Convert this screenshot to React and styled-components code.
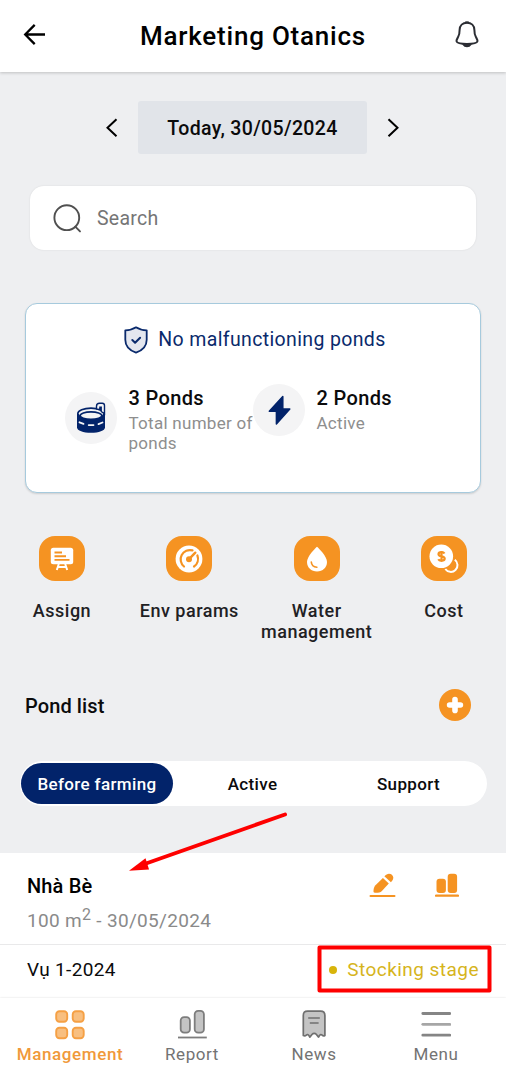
import { useState } from "react";
import styled, { createGlobalStyle } from "styled-components";

const GlobalStyle = createGlobalStyle`
* { box-sizing: border-box; }
body {
  margin: 0;
  background-color: #eeeff1;
  font-family: Roboto, "Liberation Sans", sans-serif;
  color: #0b0b0c;
}
button {
  border: none;
  background: none;
  padding: 0;
  font: inherit;
  color: inherit;
  letter-spacing: inherit;
}
svg { display: block; flex: none; }
`

const Screen = styled.div`
position: relative;
width: 506px;
height: 1077px;
overflow: hidden;
display: flex;
flex-direction: column;
`

const Header = styled.header`
display: flex;
align-items: center;
justify-content: space-between;
height: 72px;
flex: none;
padding: 0 26px 2px 22px;
background-color: #fff;
box-shadow: 0 1px 3px rgba(0, 0, 0, 0.2);
`

const Title = styled.h1`
margin: 1px 0 0 6px;
font-size: 26px;
font-weight: 500;
letter-spacing: 0.78px;
color: #000;
`

const DateBar = styled.div`
display: flex;
align-items: center;
justify-content: center;
gap: 20px;
height: 53px;
margin-top: 29px;
padding-right: 1px;
flex: none;
`

const DateButton = styled.button`
width: 229px;
height: 53px;
padding-top: 2px;
border-radius: 3px;
background-color: #e1e4e9;
font-size: 19.5px;
font-weight: 500;
letter-spacing: 0.35px;
`

const SearchBox = styled.label`
display: flex;
align-items: center;
gap: 15px;
height: 64px;
flex: none;
margin: 32px 30px 0;
padding: 1px 0 0 23px;
border-radius: 14px;
background-color: #fff;
box-shadow: 0 0 2px rgba(0, 0, 0, 0.1);
`

const SearchInput = styled.input`
width: 300px;
border: none;
outline: none;
padding: 0;
font-family: inherit;
font-size: 19.5px;
letter-spacing: 0.25px;
&::placeholder { color: #757575; opacity: 1; }
`

const Summary = styled.section`
height: 190px;
flex: none;
margin: 53px 25px 0;
border: 1px solid #a6cadd;
border-radius: 12px;
background-color: #fff;
box-shadow: 0 1px 2px rgba(0, 0, 0, 0.14);
`

const SummaryTitle = styled.div`
display: flex;
align-items: center;
justify-content: center;
gap: 10px;
height: 28px;
margin-top: 22px;
padding-left: 4px;
font-size: 19.5px;
letter-spacing: 0.36px;
color: #0a2a6c;
span { margin-top: -2px; }
`

const Stats = styled.div`
display: flex;
align-items: flex-start;
margin: 30px 0 0 39px;
`

const Stat = styled.div`
display: flex;
gap: 11.5px;
width: 188px;
`

const StatIcon = styled.div`
display: flex;
align-items: center;
justify-content: center;
width: 52px;
height: 52px;
flex: none;
border-radius: 50%;
background-color: #f4f4f5;
margin-top: ${props => props.$top || 0}px;
`

const StatText = styled.div`
padding-top: 2px;
white-space: pre;
font-size: 17px;
line-height: 20px;
letter-spacing: 0.28px;
color: #8e8e8e;
h3 {
  margin: 0 0 2px;
  font-size: 20px;
  font-weight: 500;
  line-height: 25px;
  letter-spacing: 0.35px;
  color: #0b0b0c;
}
`

const Actions = styled.nav`
display: flex;
justify-content: space-between;
flex: none;
height: 115px;
margin-top: 43px;
padding: 0 6px;
`

const Action = styled.button`
display: flex;
flex-direction: column;
align-items: center;
justify-content: flex-start;
gap: 19px;
width: 112px;
font-size: 18px;
font-weight: 500;
line-height: 21.3px;
letter-spacing: 0.5px;
color: #1f2124;
`

const ActionIcon = styled.span`
display: flex;
align-items: center;
justify-content: center;
width: 46px;
height: 45px;
flex: none;
border-radius: 16px;
background-color: #f59322;
`

const ListHeader = styled.div`
display: flex;
align-items: center;
justify-content: space-between;
height: 32px;
flex: none;
margin-top: 38px;
padding: 0 35.5px 0 25px;
font-size: 20px;
font-weight: 500;
letter-spacing: 0.1px;
span { padding-top: 2px; }
`

const AddButton = styled.button`
display: flex;
align-items: center;
justify-content: center;
width: 32px;
height: 32px;
border-radius: 50%;
background-color: #f59322;
`

const Tabs = styled.div`
display: flex;
align-items: center;
height: 45px;
flex: none;
margin: 40px 19px 0 20px;
padding: 0 2px 0 1px;
border-radius: 23px;
background-color: #fff;
`

const Tab = styled.button`
width: ${props => props.$active ? 152 : 156}px;
height: 41px;
padding-left: ${props => props.$active ? 0 : 3}px;
border-radius: 21px;
background-color: ${props => props.$active ? "#02236a" : "transparent"};
color: ${props => props.$active ? "#fff" : "#0b0b0c"};
font-size: 17px;
font-weight: 500;
letter-spacing: 0.36px;
`

const PondCard = styled.article`
flex: 1;
margin-top: 47px;
background-color: #fff;
`

const PondHead = styled.div`
display: flex;
justify-content: space-between;
height: 92px;
padding: 18px 47px 0 27px;
border-bottom: 1px solid #e9e9ea;
`

const PondName = styled.h2`
margin: 0;
font-size: 20px;
font-weight: 500;
line-height: 30px;
letter-spacing: 0.15px;
color: #000;
`

const PondMeta = styled.p`
margin: 5px 0 0;
font-size: 19px;
line-height: 30px;
letter-spacing: 0.32px;
color: #8a8a8a;
sup {
  font-size: 16px;
  line-height: 0;
  vertical-align: 7px;
}
`

const PondActions = styled.div`
display: flex;
align-items: flex-start;
gap: 39px;
padding-top: 2px;
`

const Crop = styled.div`
display: flex;
align-items: center;
justify-content: space-between;
height: 49px;
padding: 0 27px;
font-size: 19px;
letter-spacing: 0.35px;
`

const Stage = styled.span`
display: flex;
align-items: center;
gap: 10px;
font-size: 19px;
letter-spacing: 0.46px;
color: #d6b41c;
&::before {
  content: "";
  width: 8px;
  height: 8px;
  border-radius: 50%;
  background-color: #d8b40a;
}
`

const BottomNav = styled.nav`
display: flex;
height: 79px;
flex: none;
padding: 0 9px 0 9px;
background-color: #fff;
box-shadow: 0 0 2px rgba(0, 0, 0, 0.14);
`

const NavItem = styled.button`
display: flex;
flex-direction: column;
align-items: center;
width: 122px;
padding-top: 12px;
gap: 2px;
font-size: 17px;
line-height: 24px;
letter-spacing: 0.6px;
font-weight: ${props => props.$active ? 500 : 400};
color: ${props => props.$active ? "#f0993a" : "#737373"};
`

const Marks = styled.svg`
position: absolute;
left: 0;
top: 0;
pointer-events: none;
`

const BackIcon = () => (
  <svg width="24" height="24" viewBox="0 0 24 24" fill="none" stroke="#000" strokeWidth="2.3">
    <path d="M23 11.500H3.200M12.700 1.900L3.200 11.500l9.500 9.600" />
  </svg>
)

const BellIcon = () => (
  <svg width="26" height="28" viewBox="0 0 26 28" fill="none" stroke="#2b2d33" strokeWidth="2" strokeLinejoin="round">
    <path d="M13 1.700c-4.400 0-7.300 3.100-7.400 7.200 0 3.200-.3 5.200-1.500 7.200-.9 1.600-2 3-1.500 4.400.5 1.600 4.400 2.400 10.400 2.400s9.900-.8 10.400-2.400c.5-1.400-.6-2.800-1.500-4.400-1.200-2-1.500-4-1.500-7.200C20.300 4.800 17.400 1.700 13 1.700z" />
    <path d="M9.500 23.500c1.500 2.300 5.500 2.300 7 0z" fill="#2b2d33" />
    <path d="M11.200 1.400h3.600" />
  </svg>
)

const Chevron = ({ d }) => (
  <svg width="12" height="20" viewBox="0 0 12 20" fill="none" stroke="#000" strokeWidth="2">
    <path d={d} />
  </svg>
)

const SearchIcon = () => (
  <svg width="29" height="30" viewBox="0 0 29 30" fill="none" stroke="#505050" strokeWidth="1.900" strokeLinecap="round">
    <circle cx="13.800" cy="13.700" r="12.400" />
    <path d="M22.300 22.700L27 27.400" />
  </svg>
)

const ShieldIcon = () => (
  <svg width="24" height="28" viewBox="0 0 24 28" fill="none" stroke="#0a2a6c" strokeWidth="1.800" strokeLinejoin="round" strokeLinecap="round">
    <path d="M12 1.300c3 2 6.500 2.900 10.700 3v9.500c0 6.500-4 10.600-10.700 12.900C5.300 24.400 1.300 20.300 1.300 13.800V4.300C5.500 4.200 9 3.300 12 1.300z" fill="#e4e7ef" />
    <path d="M8.300 14l2.800 2.700 5-5" strokeWidth="2" />
  </svg>
)

const PondIcon = () => (
  <svg width="30" height="32" viewBox="0 0 30 32">
    <path d="M1 11.500v14c0 3.100 6.300 5.300 14 5.300s14-2.200 14-5.300v-14z" fill="#02236a" />
    <ellipse cx="15" cy="11.500" rx="13.200" ry="5.400" fill="#f4f4f5" stroke="#02236a" strokeWidth="1.600" />
    <ellipse cx="15" cy="13.600" rx="10.800" ry="3.700" fill="#f4f4f5" stroke="#02236a" strokeWidth="1.600" />
    <path d="M20.500 7V4.200c0-2 1-3 3-3h2.800c1.600 0 2.200.7 2.200 2.200v8.500l-3.300-2.400V5.200h-1.300v2.600z" fill="#f4f4f5" stroke="#02236a" strokeWidth="1.400" />
    <path d="M3.500 20.300l4 1.600M12.700 23.100h4.800M22.500 22.100l4-1.600" stroke="#f4f4f5" strokeWidth="1.800" strokeLinecap="round" />
  </svg>
)

const BoltIcon = () => (
  <svg width="24" height="32" viewBox="0 0 24 32" fill="#02236a" stroke="#02236a" strokeWidth="1.500" strokeLinejoin="round">
    <path d="M15.800 2.500L2.300 17.200h7.100v12.700L22.800 15h-7z" />
  </svg>
)

const AssignIcon = () => (
  <svg width="26" height="26" viewBox="0 0 26 26" fill="none">
    <rect x="1.800" y="1.800" width="22.400" height="16.400" rx="2.500" fill="#fff" />
    <path d="M5.500 6.500h7.500M5.500 10.200h11.500M5.500 13.900h15" stroke="#f59322" strokeWidth="1.900" />
    <path d="M9.800 18L7.800 24M16.200 18L18.200 24M9 21h8" stroke="#fff" strokeWidth="2" />
  </svg>
)

const GaugeIcon = () => (
  <svg width="28" height="28" viewBox="0 0 28 28" fill="none" strokeLinecap="round">
    <circle cx="14" cy="14" r="13.400" fill="#fff" />
    <path d="M9 21.500A9.300 9.300 0 0 1 17.500 5.400M22.400 10.500a9.300 9.300 0 0 1-3.400 11" stroke="#f59322" strokeWidth="2.200" />
    <path d="M14.500 13.700L20.300 7.700" stroke="#f59322" strokeWidth="2.400" />
    <circle cx="14" cy="14.300" r="3" fill="#f59322" />
  </svg>
)

const DropIcon = () => (
  <svg width="22" height="26" viewBox="0 0 22 26" fill="none">
    <path d="M11 .7C9.300 2.200 1 10.300 1 16c0 5.500 4.300 9.500 10 9.500S21 21.500 21 16C21 10.300 12.700 2.200 11 .7z" fill="#fff" />
    <path d="M5.300 16c.2 3 2.400 5 5.600 5.200" stroke="#f59322" strokeWidth="1.600" strokeLinecap="round" />
  </svg>
)

const CoinIcon = () => (
  <svg width="30" height="30" viewBox="0 0 30 30" fill="none">
    <path d="M16.300 25A6.700 6.700 0 1 0 25.800 15.800" stroke="#fff" strokeWidth="2" />
    <circle cx="12.300" cy="12.300" r="11.800" fill="#fff" />
    <path d="M15.500 9.500c-.6-1-1.700-1.300-3-1.300-1.800 0-3 .7-3 2.100 0 3 6.200 1.200 6.200 4.300 0 1.500-1.300 2.200-3.200 2.200-1.500 0-2.700-.5-3.200-1.500M12.500 7v11" stroke="#f59322" strokeWidth="2.200" />
  </svg>
)

const PlusIcon = () => (
  <svg width="18" height="18" viewBox="0 0 18 18" stroke="#fff" strokeWidth="5.600" strokeLinecap="round">
    <path d="M9 3.600v10.800M3.600 9h10.800" />
  </svg>
)

const EditIcon = () => (
  <svg width="27" height="26" viewBox="0 0 27 26" fill="#f59322">
    <path d="M13.900 4.900l5.900 5.500-6.900 7.600c-1.500 1.600-4.300 1.900-7.100 1.800-1-.1-1.300-.4-1.300-1.200 0-2.200.2-4.500 1.700-6.200z" />
    <path d="M15.400 3.300c2.400-3 5.400-3.400 7.500-1.500 2.100 2 1.900 4.800-1 7.500z" />
    <path d="M1.500 23h24" stroke="#f59322" strokeWidth="2" strokeLinecap="round" />
  </svg>
)

const StatsIcon = () => (
  <svg width="24" height="25" viewBox="0 0 24 25" fill="#f59322">
    <rect x="1.500" y="5.700" width="9.400" height="14.300" rx="3" />
    <rect x="12.700" y=".8" width="9.400" height="19.200" rx="3" />
    <path d="M1 22.700h22" stroke="#f59322" strokeWidth="2.200" strokeLinecap="round" />
  </svg>
)

const GridIcon = () => (
  <svg width="30" height="30" viewBox="0 0 30 30" fill="#f8bf80" stroke="#f5a044" strokeWidth="1.900">
    <rect x="1.200" y="1.200" width="11" height="10.600" rx="3.200" />
    <rect x="17.700" y="1.200" width="11" height="10.600" rx="3.200" />
    <rect x="1.200" y="17.700" width="11" height="10.600" rx="3.200" />
    <rect x="17.700" y="17.700" width="11" height="10.600" rx="3.200" />
  </svg>
)

const ReportIcon = () => (
  <svg width="30" height="30" viewBox="0 0 30 30" fill="#c4c4c4" stroke="#7d7d7d" strokeWidth="1.800">
    <rect x="3.700" y="7.200" width="9.200" height="15.500" rx="3.400" />
    <rect x="17.700" y=".9" width="9.200" height="21.800" rx="3.400" />
    <path d="M1 27.500h28.800" />
  </svg>
)

const NewsIcon = () => (
  <svg width="30" height="30" viewBox="0 0 30 30" fill="#c4c4c4" stroke="#6f6f6f" strokeWidth="1.700" strokeLinejoin="round">
    <path d="M4.300 25.500V5.500c0-3 1.300-4.300 4.300-4.300h13c3 0 4.300 1.300 4.300 4.300v20c-1 .6-2 .4-2.800-.4-.9-.9-1.900-.7-2.500.3l-1 1.700-2.400-2.800c-1-1.200-3-1.200-4 0l-2.400 2.800-1-1.700c-.6-1-1.600-1.200-2.500-.3-.8.800-1.900 1-3 .4z" />
    <path d="M9.200 8h11.600M10.800 13h8.800" strokeWidth="1.600" />
  </svg>
)

const MenuIcon = () => (
  <svg width="30" height="30" viewBox="0 0 30 30" stroke="#858585" strokeWidth="2.800" strokeLinecap="round">
    <path d="M1.800 3.500h27M1.800 25.200h27" />
    <path d="M1.800 14.300h27" stroke="#a6a6a6" />
  </svg>
)

const actions = [
  { label: "Assign", icon: <AssignIcon /> },
  { label: "Env params", icon: <GaugeIcon /> },
  { label: "Water management", icon: <DropIcon /> },
  { label: "Cost", icon: <CoinIcon /> },
]

const navItems = [
  { label: "Management", icon: <GridIcon /> },
  { label: "Report", icon: <ReportIcon /> },
  { label: "News", icon: <NewsIcon /> },
  { label: "Menu", icon: <MenuIcon /> },
]

const tabs = ["Before farming", "Active", "Support"]

export default function App() {
  const [tab, setTab] = useState(tabs[0]);
  const [page, setPage] = useState("Management");

  return (
    <Screen>
      <GlobalStyle />
      <Header>
        <button><BackIcon /></button>
        <Title>Marketing Otanics</Title>
        <button><BellIcon /></button>
      </Header>
      <DateBar>
        <button><Chevron d="M10.500 1.200L1.500 9.700l9 8.500" /></button>
        <DateButton>Today, 30/05/2024</DateButton>
        <button><Chevron d="M1.500 1.200L10.500 9.700l-9 8.500" /></button>
      </DateBar>
      <SearchBox>
        <SearchIcon />
        <SearchInput placeholder="Search" />
      </SearchBox>
      <Summary>
        <SummaryTitle>
          <ShieldIcon />
          <span>No malfunctioning ponds</span>
        </SummaryTitle>
        <Stats>
          <Stat>
            <StatIcon $top={8}><PondIcon /></StatIcon>
            <StatText>
              <h3>3 Ponds</h3>
              {"Total number of\nponds"}
            </StatText>
          </Stat>
          <Stat>
            <StatIcon><BoltIcon /></StatIcon>
            <StatText>
              <h3>2 Ponds</h3>
              Active
            </StatText>
          </Stat>
        </Stats>
      </Summary>
      <Actions>
        {actions.map(({ label, icon }) => (
          <Action key={label}>
            <ActionIcon>{icon}</ActionIcon>
            <span>{label}</span>
          </Action>
        ))}
      </Actions>
      <ListHeader>
        <span>Pond list</span>
        <AddButton><PlusIcon /></AddButton>
      </ListHeader>
      <Tabs>
        {tabs.map(name => (
          <Tab key={name} $active={name === tab} onClick={() => setTab(name)}>{name}</Tab>
        ))}
      </Tabs>
      <PondCard>
        <PondHead>
          <div>
            <PondName>Nhà Bè</PondName>
            <PondMeta>100 m<sup>2</sup> - 30/05/2024</PondMeta>
          </div>
          <PondActions>
            <EditIcon />
            <StatsIcon />
          </PondActions>
        </PondHead>
        <Crop>
          Vụ 1-2024
          <Stage>Stocking stage</Stage>
        </Crop>
      </PondCard>
      <BottomNav>
        {navItems.map(({ label, icon }) => (
          <NavItem key={label} $active={label === page} onClick={() => setPage(label)}>
            {icon}
            <span>{label}</span>
          </NavItem>
        ))}
      </BottomNav>
      <Marks width="506" height="1077" viewBox="0 0 506 1077" fill="none" stroke="#fe0000">
        <path d="M285 814.500L146 863.500" strokeWidth="3.900" strokeLinecap="round" />
        <path d="M129 870.800L145.500 858.300L149 869.500z" fill="#fe0000" stroke="none" />
        <rect x="319.500" y="947.500" width="170" height="43" strokeWidth="4" strokeLinejoin="round" />
      </Marks>
    </Screen>
  )
}
